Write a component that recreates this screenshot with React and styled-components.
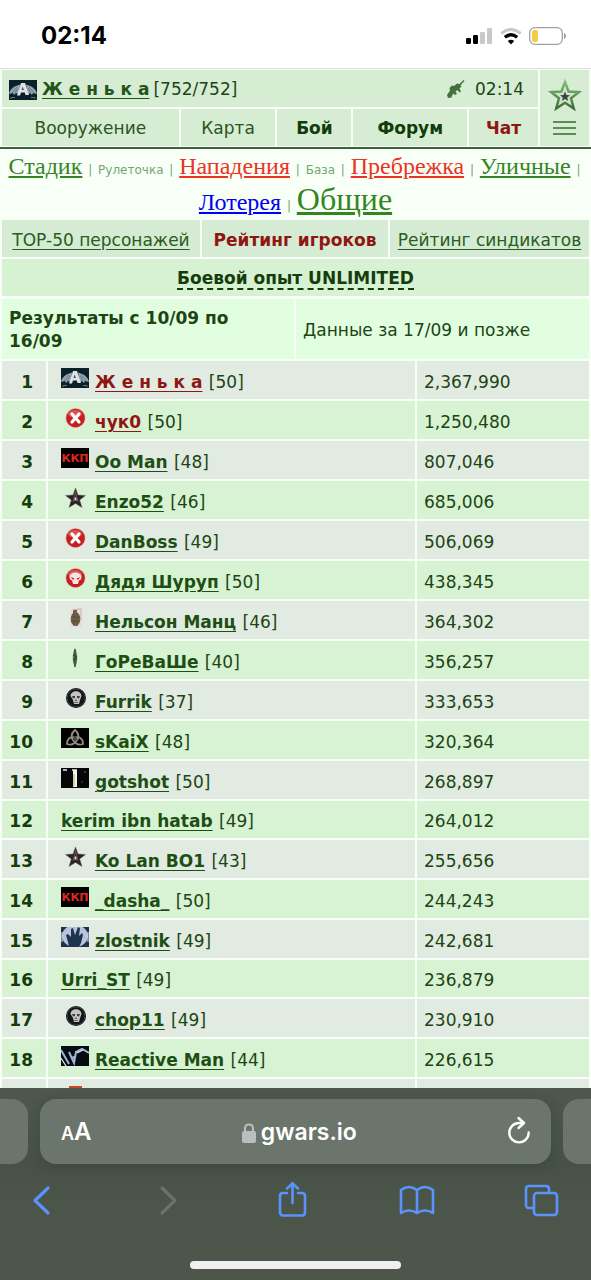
import React from "react";
import styled, { createGlobalStyle } from "styled-components";

const GlobalStyle = createGlobalStyle`
  * { box-sizing: border-box; }
  body {
    margin: 0;
    background: #f8fff7;
    color: #1d4513;
    font: 17px/23px Verdana, "DejaVu Sans", sans-serif;
  }
  button { border: 0; padding: 0; background: none; font: inherit; color: inherit; cursor: pointer; }
  a { color: inherit; }
  svg { flex: none; }
`;

const Page = styled.div`
  min-height: 100vh;
  padding-bottom: 160px;
`;

/* ---------- phone status bar ---------- */
const StatusBar = styled.div`
  display: flex;
  align-items: center;
  justify-content: space-between;
  height: 69px;
  padding: 4px 24px 0 41px;
  background: #fff;
  border-bottom: 1px solid #dcdedc;
`;
const Clock = styled.time`
  font: 700 24px/28px Inter, sans-serif;
  color: #000;
`;
const StatusIcons = styled.div`
  display: flex;
  align-items: center;
  gap: 7px;
`;

/* ---------- site header ---------- */
const Header = styled.header`
  display: grid;
  grid-template-columns: 1fr 49px;
  gap: 2px;
  padding: 1px 2px;
  border-bottom: 2px solid #3c5f3d;
`;
const HeaderRows = styled.div`
  display: grid;
  gap: 2px;
`;
const UserBar = styled.div`
  display: flex;
  align-items: center;
  height: 37px;
  padding: 2px 14px 0 7px;
  background: #d6edd3;
`;
const UserName = styled.a`
  margin: 0 4px 0 5px;
  font-weight: 700;
  color: #23541a;
  text-underline-offset: 3px;
`;
const UserTime = styled.div`
  display: flex;
  align-items: center;
  gap: 10px;
  margin-left: auto;
`;
const Nav = styled.nav`
  display: grid;
  grid-template-columns: 177fr 95fr 74fr 114fr 69fr;
  gap: 2px;
`;
const NavLink = styled.a`
  height: 37px;
  line-height: 38px;
  text-align: center;
  text-decoration: none;
  background: #d6edd3;
  font-weight: ${(p) => (p.$strong ? 700 : 400)};
  color: ${(p) => (p.$alert ? "#8f1713" : p.$strong ? "#123c0a" : "#2a5422")};
`;
const MenuButton = styled.button`
  display: flex;
  flex-direction: column;
  align-items: center;
  gap: 9px;
  padding-top: 9px;
  background: #d6edd3;
`;

/* ---------- shortcut links ---------- */
const Shortcuts = styled.div`
  height: 71px;
  padding: 3px 4px 0;
  text-align: center;
  font-size: 12px;
  line-height: 36px;
  color: #74a671;
`;
const Shortcut = styled.a`
  font-family: "Liberation Serif", serif;
  font-size: ${(p) => (p.$big ? 32 : 24)}px;
  line-height: 0;
  color: ${(p) => p.$color};
  text-underline-offset: 2px;
`;
const SmallShortcut = styled.a`
  text-decoration: none;
`;
const Pipe = styled.span`
  padding: 0 2px;
`;

/* ---------- rating tabs and headings ---------- */
const Panel = styled.div`
  display: grid;
  gap: 2px;
  padding: 0 2px;
`;
const Tabs = styled.nav`
  display: grid;
  grid-template-columns: 198fr 186fr 199fr;
  gap: 2px;
`;
const Tab = styled.a`
  height: 37px;
  line-height: 40px;
  text-align: center;
  white-space: nowrap;
  text-underline-offset: 3px;
  background: #d5ebd3;
  font-weight: ${(p) => (p.$active ? 700 : 400)};
  color: ${(p) => (p.$active ? "#8f1713" : "#2a5c20")};
  text-decoration: ${(p) => (p.$active ? "none" : "underline")};
`;
const Title = styled.h1`
  height: 37px;
  margin: 0;
  padding-top: 8px;
  text-align: center;
  font-size: 17px;
  line-height: 23px;
  color: #143d0b;
  background: #d7f1d3;
`;
const Hint = styled.span`
  border-bottom: 2px dashed #143d0b;
`;
const Periods = styled.div`
  display: grid;
  grid-template-columns: 292fr 293fr;
  gap: 2px;
  padding: 1px 0 0;
`;
const Period = styled.div`
  display: flex;
  align-items: center;
  min-height: 60px;
  padding: 2px 7px 0;
  background: #e1fee0;
  font-weight: ${(p) => (p.$active ? 700 : 400)};
`;

/* ---------- rating table ---------- */
const Table = styled.table`
  width: 100%;
  table-layout: fixed;
  border-spacing: 2px;
`;
const Row = styled.tr`
  height: ${(p) => (p.$plain ? 37 : 38)}px;
  background: ${(p) => (p.$even ? "#d7f3d4" : "#e1ebe1")};
`;
const Cell = styled.td`
  padding: 0 7px;
  vertical-align: baseline;
`;
const RankCell = styled(Cell)`
  padding-right: 13px;
  text-align: right;
  font-weight: 700;
  color: #143d0b;
`;
const PlayerCell = styled(Cell)`
  padding: ${(p) => (p.$plain ? 9 : 7)}px 0 0 13px;
  svg { margin-right: 6px; vertical-align: baseline; }
`;
const PlayerLink = styled.a`
  margin-right: 1px;
  font-weight: 700;
  text-underline-offset: 3px;
  color: ${(p) => (p.$red ? "#8f1713" : "#1d4f12")};
`;

/* ---------- browser chrome ---------- */
const BrowserBar = styled.footer`
  position: fixed;
  left: 0;
  right: 0;
  bottom: 0;
  padding: 11px 0;
  background: linear-gradient(#4e584f 0, #475146 40%, #4c5549 60%, #4e554b 100%);
`;
const AddressRow = styled.div`
  display: flex;
  gap: 12px;
`;
const NeighbourTab = styled.div`
  width: 28px;
  background: #6b756b;
  border-radius: ${(p) => (p.$left ? "0 16px 16px 0" : "16px 0 0 16px")};
`;
const Address = styled.div`
  flex: 1;
  display: flex;
  align-items: center;
  justify-content: space-between;
  height: 65px;
  padding: 2px 20px 0 21px;
  border-radius: 16px;
  background: #6b756b;
  box-shadow: 0 2px 12px rgba(40, 50, 40, 0.3);
  color: #fff;
  font-family: Inter, sans-serif;
`;
const TextSize = styled.button`
  font-size: 24px;
  font-weight: 600;
  small { font-size: 18px; }
`;
const Host = styled.div`
  display: flex;
  align-items: center;
  gap: 5px;
  font-size: 23px;
  font-weight: 600;
`;
const Toolbar = styled.div`
  display: flex;
  justify-content: space-between;
  padding: 18px 31px 0 23px;
  color: #5a93fb;
`;
const ToolButton = styled.button`
  width: 36px;
  height: 36px;
  color: ${(p) => (p.disabled ? "#6a7269" : "inherit")};
`;
const HomeIndicator = styled.div`
  width: 211px;
  height: 8px;
  margin: 43px auto 0;
  border-radius: 4px;
  background: #f0f0f0;
`;

/* ---------- clan badges ---------- */
const Badge = ({ children, ground }) => (
  <svg width="28" height="20" viewBox="0 0 28 20" aria-hidden="true">
    {ground && <rect width="28" height="20" fill={ground} />}
    {children}
  </svg>
);
const Wings = () => (
  <Badge ground="#0b2028">
    <path d="M0 14C1 9 5 6 11 4.500L10 14L7 13L5 15L4 13ZM28 14C27 9 23 6 17 4.500L19 14L21 13L23 15L24 13Z" fill="#93a3b3" />
    <path d="M3 13L8 7M6 13L9 8M25 13L20 7M22 13L19 8" stroke="#5d7282" strokeWidth=".8" />
    <path d="M12 3H16L20 15H16.500L15.800 12.500H12L11 15.500H8Z" fill="#dfe3e1" />
    <path d="M13.500 6.500L15 10H12.500Z" fill="#44545c" />
    <path d="M2 19V17.500H6M26 19V17.500H22" fill="none" stroke="#71726a" strokeWidth="1" />
  </Badge>
);
const Ball = ({ children }) => (
  <Badge>
    <circle cx="14.5" cy="10" r="10" fill="#e3b1aa" />
    <circle cx="14.5" cy="10" r="9.300" fill="#c5201f" />
    <ellipse cx="14" cy="6" rx="7" ry="4" fill="#e06a64" opacity=".7" />
    {children}
  </Badge>
);
const Cross = () => (
  <Ball>
    <path d="M11 6L18 14M18 6L11 14" stroke="#fff" strokeWidth="3.2" strokeLinecap="round" />
  </Ball>
);
const RedSkull = () => (
  <Ball>
    <path d="M8.500 9C8.500 3 20.500 3 20.500 9L20 11.500L18 12.500L17 16H12L11 12.500L9 11.500Z" fill="#fbe3e0" />
    <path d="M10 9L13.500 10.500L12 12ZM19 9L15.500 10.500L17 12Z" fill="#c5201f" />
  </Ball>
);
const Kkp = () => (
  <Badge ground="#000">
    <text x="14" y="14" textAnchor="middle" fontFamily="DejaVu Sans, sans-serif" fontWeight="700" fontSize="11" fill="#e0281d">ККП</text>
  </Badge>
);
const DarkStar = () => (
  <Badge>
    <path d="M14.500 0L17 7L24.500 7.500L18.700 12L21 19.500L14.500 15.500L8 19.500L10.300 12L4.500 7.500L12 7Z" fill="#2b2023" stroke="#6e6265" strokeWidth=".5" />
    <rect x="13.500" y="9.500" width="2" height="3" fill="#d9e6d5" />
    <path d="M14.500 4L12 14M14.500 4L17 14" stroke="#7d6467" strokeWidth=".8" fill="none" />
  </Badge>
);
const Grenade = () => (
  <Badge>
    <path d="M9 2L13 0H21V19H10Z" fill="#e7dcd6" />
    <path d="M12 2L20 1V12" fill="none" stroke="#d8afa9" strokeWidth="1" />
    <rect x="12" y="2" width="4" height="4" fill="#6d6250" />
    <ellipse cx="14.500" cy="11" rx="4.800" ry="7" fill="#706449" />
    <path d="M10 9H19M10 13H19M13 5V18M16 5V18" stroke="#514732" strokeWidth=".7" />
  </Badge>
);
const Feather = () => (
  <Badge>
    <path d="M14 0Q17 6 16 14L14 20L12 14Q11 6 14 0Z" fill="#607b5c" />
    <path d="M14 1V19M12 7L16 9M12 12L16 10" stroke="#263b24" strokeWidth="1" />
  </Badge>
);
const Skull = () => (
  <Badge>
    <circle cx="15" cy="10" r="10" fill="#141518" />
    <circle cx="15" cy="10" r="9" fill="none" stroke="#3c3d42" strokeWidth="1" />
    <path d="M9.500 8C9.500 1.500 20.500 1.500 20.500 8L19 12L18 16H13L12 12Z" fill="#c3c3c3" />
    <path d="M11 8H14V10L12 10.500ZM19 8H16V10L18 10.500ZM15 11L14 13H16Z" fill="#3c3d3f" />
    <path d="M13 14.500H17" stroke="#555" strokeWidth=".8" />
  </Badge>
);
const Knot = () => (
  <Badge ground="#000">
    <g fill="none" stroke="#968b79" strokeWidth="1.800">
      <path d="M14 2C9 6 10 11 14 14C18 11 19 6 14 2Z" />
      <path d="M6 16C6 10 10 8 15 10C16 14 12 18 6 16Z" />
      <path d="M22 16C22 10 18 8 13 10C12 14 16 18 22 16Z" />
    </g>
    <circle cx="14" cy="11" r="2" fill="#344753" />
  </Badge>
);
const Pillar = () => (
  <Badge ground="#050607">
    <rect x="12" y="2" width="4" height="17" fill="#f5f2e6" />
    <path d="M13 6V18" stroke="#b7a958" strokeWidth="1" />
    <path d="M2 2H6M11 2H16" stroke="#e7eeee" strokeWidth="1.500" />
    <circle cx="24" cy="4" r=".7" fill="#788" />
    <circle cx="21" cy="14" r=".7" fill="#566" />
  </Badge>
);
const Hand = () => (
  <Badge ground="#20314a">
    <ellipse cx="14" cy="9" rx="13" ry="11" fill="#b8c4db" />
    <path d="M8 20L7 15L5 8L7 7L10 10L10 2L12 1L14 8L17 0L19 1L18 9L21 6L22 8L20 16L18 20Z" fill="#1e3550" />
    <path d="M1 5V15M27 5V15" stroke="#e0e6f3" strokeWidth="1" />
  </Badge>
);
const Lightning = () => (
  <Badge ground="#060b12">
    <path d="M0 4L8 18M8 6L13 17L15 6L21 3L28 7M11 12L15 10" fill="none" stroke="#9db8d4" strokeWidth="2" />
    <path d="M0 12L5 20M16 7L22 4" stroke="#dcebf8" strokeWidth="1.200" />
  </Badge>
);
const Crest = () => (
  <Badge>
    <path d="M8 0H21V12L14 20L8 12Z" fill="#c8481f" />
  </Badge>
);

const players = [
  [Wings, "Ж е н ь к а", 50, "2,367,990", true],
  [Cross, "чук0", 50, "1,250,480", true],
  [Kkp, "Oo Man", 48, "807,046"],
  [DarkStar, "Enzo52", 46, "685,006"],
  [Cross, "DanBoss", 49, "506,069"],
  [RedSkull, "Дядя Шуруп", 50, "438,345"],
  [Grenade, "Нельсон Манц", 46, "364,302"],
  [Feather, "ГоРеВаШе", 40, "356,257"],
  [Skull, "Furrik", 37, "333,653"],
  [Knot, "sKaiX", 48, "320,364"],
  [Pillar, "gotshot", 50, "268,897"],
  [null, "kerim ibn hatab", 49, "264,012"],
  [DarkStar, "Ko Lan BO1", 43, "255,656"],
  [Kkp, "_dasha_", 50, "244,243"],
  [Hand, "zlostnik", 49, "242,681"],
  [null, "Urri_ST", 49, "236,879"],
  [Skull, "chop11", 49, "230,910"],
  [Lightning, "Reactive Man", 44, "226,615"],
];

const Signal = () => (
  <svg width="27" height="17" viewBox="0 0 27 17" aria-hidden="true">
    <rect x="0" y="10" width="5" height="6" rx="1.200" />
    <rect x="7" y="7" width="5" height="9" rx="1.200" />
    <rect x="14" y="4" width="5" height="12" rx="1.200" fill="#c8c8c8" />
    <rect x="21" y="0" width="5" height="16" rx="1.200" fill="#c8c8c8" />
  </svg>
);
const Wifi = () => (
  <svg width="22" height="17" viewBox="0 0 22 17" fill="none" aria-hidden="true">
    <path d="M1.200 5.500Q11 -2.500 20.800 5.500" stroke="#c8c8c8" strokeWidth="3" />
    <path d="M4.800 9.300Q11 4.300 17.200 9.300" stroke="#000" strokeWidth="3.400" />
    <path d="M7.800 13Q11 10.500 14.200 13L11 16.500Z" fill="#000" />
  </svg>
);
const Battery = () => (
  <svg width="38" height="18" viewBox="0 0 38 18" fill="none" aria-hidden="true">
    <rect x=".7" y=".7" width="32.600" height="16.600" rx="5" stroke="#a1a1a1" strokeWidth="1.300" />
    <rect x="3" y="3" width="6" height="12" rx="2" fill="#f6cb45" />
    <path d="M35 6Q37 7 37 9Q37 11 35 12Z" fill="#999" />
  </svg>
);
const Rifle = () => (
  <svg width="18" height="19" viewBox="0 0 18 19" fill="#43703e" aria-hidden="true">
    <path d="M16.500 0L17.500 .8L13.500 5.500L14.500 6.500L12.500 8.500L14 11.500L12.500 12.500L10.500 10L8.500 11.500L10 14L8 15L6 13.500L4.500 17.500L1 18L0 15L3 10.500L2.500 8L5 5.500L7 6L10 3.500L12.500 4Z" />
  </svg>
);
const StarLogo = () => (
  <svg width="34" height="33" viewBox="0 0 34 33" aria-hidden="true">
    <defs>
      <linearGradient id="star" x1="0" y1="0" x2="0" y2="1">
        <stop offset="0" stopColor="#7dbd78" />
        <stop offset="1" stopColor="#3f6b38" />
      </linearGradient>
    </defs>
    <path d="M17 3L20.600 12.500L31 13L23 19.300L25.800 29.500L17 23.800L8.200 29.500L11 19.300L3 13L13.400 12.500Z" fill="#cfe3cd" stroke="url(#star)" strokeWidth="2.400" />
    <path d="M17 12.500L18.400 16L22 16.200L19.200 18.500L20.200 22L17 20L13.800 22L14.800 18.500L12 16.200L15.600 16Z" fill="#3b4540" />
  </svg>
);
const Burger = () => (
  <svg width="24" height="15" viewBox="0 0 24 15" stroke="#5e8c59" strokeWidth="2" aria-hidden="true">
    <path d="M0 1H23M0 7H23M0 13H23" />
  </svg>
);
const Lock = () => (
  <svg width="14" height="20" viewBox="0 0 14 20" aria-hidden="true">
    <path d="M3 9V5.500Q3 1.500 7 1.500Q11 1.500 11 5.500V9" fill="none" stroke="#b9bfbd" strokeWidth="2" />
    <rect y="8" width="14" height="12" rx="2" fill="#b9bfbd" />
  </svg>
);
const Reload = () => (
  <svg width="24" height="28" viewBox="0 0 24 28" fill="none" stroke="#fff" strokeWidth="2.400" strokeLinecap="round" strokeLinejoin="round" aria-hidden="true">
    <path d="M17 7H12A9.700 9.700 0 1 0 21.700 16.500" />
    <path d="M11.500 2L17 7L11.500 12" />
  </svg>
);
const ToolIcon = ({ children }) => (
  <svg width="36" height="36" viewBox="0 0 36 36" fill="none" stroke="currentColor" strokeWidth="2.600" strokeLinecap="round" strokeLinejoin="round" aria-hidden="true">
    {children}
  </svg>
);

const Dot = () => <> <Pipe>|</Pipe> </>;

export default function App() {
  return (
    <>
      <GlobalStyle />
      <Page>
        <StatusBar>
          <Clock>02:14</Clock>
          <StatusIcons>
            <Signal />
            <Wifi />
            <Battery />
          </StatusIcons>
        </StatusBar>

        <Header>
          <HeaderRows>
            <UserBar>
              <Wings />
              <UserName href="#me">Ж е н ь к а</UserName>
              [752/752]
              <UserTime>
                <Rifle />
                <span>02:14</span>
              </UserTime>
            </UserBar>
            <Nav>
              <NavLink href="#arms">Вооружение</NavLink>
              <NavLink href="#map">Карта</NavLink>
              <NavLink href="#battle" $strong>Бой</NavLink>
              <NavLink href="#forum" $strong>Форум</NavLink>
              <NavLink href="#chat" $strong $alert>Чат</NavLink>
            </Nav>
          </HeaderRows>
          <MenuButton aria-label="Меню">
            <StarLogo />
            <Burger />
          </MenuButton>
        </Header>

        <Shortcuts>
          <Shortcut href="#stadium" $color="#34851f">Стадик</Shortcut>
          <Dot />
          <SmallShortcut href="#roulette">Рулеточка</SmallShortcut>
          <Dot />
          <Shortcut href="#attacks" $color="#eb3323">Нападения</Shortcut>
          <Dot />
          <SmallShortcut href="#base">База</SmallShortcut>
          <Dot />
          <Shortcut href="#coast" $color="#eb3323">Пребрежка</Shortcut>
          <Dot />
          <Shortcut href="#street" $color="#34851f">Уличные</Shortcut>
          <Dot />
          <Shortcut href="#lottery" $color="#0000f5">Лотерея</Shortcut>
          <Dot />
          <Shortcut href="#common" $color="#34851f" $big>Общие</Shortcut>
        </Shortcuts>

        <Panel>
          <Tabs>
            <Tab href="#top">TOP-50 персонажей</Tab>
            <Tab href="#players" $active>Рейтинг игроков</Tab>
            <Tab href="#syndicates">Рейтинг синдикатов</Tab>
          </Tabs>
          <Title><Hint>Боевой опыт UNLIMITED</Hint></Title>
          <Periods>
            <Period $active>Результаты с 10/09 по 16/09</Period>
            <Period>Данные за 17/09 и позже</Period>
          </Periods>
        </Panel>

        <Table>
          <colgroup>
            <col style={{ width: 44 }} />
            <col />
            <col style={{ width: 172 }} />
          </colgroup>
          <tbody>
            {players.map(([Icon, name, level, points, red], i) => (
              <Row key={name} $even={i % 2 === 1} $plain={!Icon}>
                <RankCell>{i + 1}</RankCell>
                <PlayerCell $plain={!Icon}>
                  {Icon && <Icon />}
                  <PlayerLink href="#player" $red={red}>{name}</PlayerLink> [{level}]
                </PlayerCell>
                <Cell>{points}</Cell>
              </Row>
            ))}
            <Row>
              <RankCell />
              <PlayerCell><Crest /></PlayerCell>
              <Cell />
            </Row>
          </tbody>
        </Table>
      </Page>

      <BrowserBar>
        <AddressRow>
          <NeighbourTab $left />
          <Address>
            <TextSize><small>A</small>A</TextSize>
            <Host><Lock />gwars.io</Host>
            <button aria-label="Обновить"><Reload /></button>
          </Address>
          <NeighbourTab />
        </AddressRow>
        <Toolbar>
          <ToolButton aria-label="Назад">
            <ToolIcon><path d="M25 6L12 18.500L25 31" strokeWidth="3.200" /></ToolIcon>
          </ToolButton>
          <ToolButton aria-label="Вперёд" disabled>
            <ToolIcon><path d="M14 6L27 18.500L14 31" strokeWidth="3.200" /></ToolIcon>
          </ToolButton>
          <ToolButton aria-label="Поделиться">
            <ToolIcon>
              <path d="M13 11H9Q6 11 6 14V30Q6 33.500 9 33.500H28Q31 33.500 31 30V14Q31 11 28 11H24" />
              <path d="M18.500 21V1M13 6.500L18.500 1.500L24 6.500" />
            </ToolIcon>
          </ToolButton>
          <ToolButton aria-label="Закладки">
            <ToolIcon>
              <path d="M18 8Q10 2 2 8V31Q10 26 18 31Q26 26 34 31V8Q26 2 18 8ZM18 8V31" />
            </ToolIcon>
          </ToolButton>
          <ToolButton aria-label="Вкладки">
            <ToolIcon>
              <rect x="10" y="11" width="23" height="22" rx="3" />
              <path d="M9 26H5Q2 26 2 23V7Q2 4 5 4H22Q25 4 25 7V10" />
            </ToolIcon>
          </ToolButton>
        </Toolbar>
        <HomeIndicator />
      </BrowserBar>
    </>
  );
}
